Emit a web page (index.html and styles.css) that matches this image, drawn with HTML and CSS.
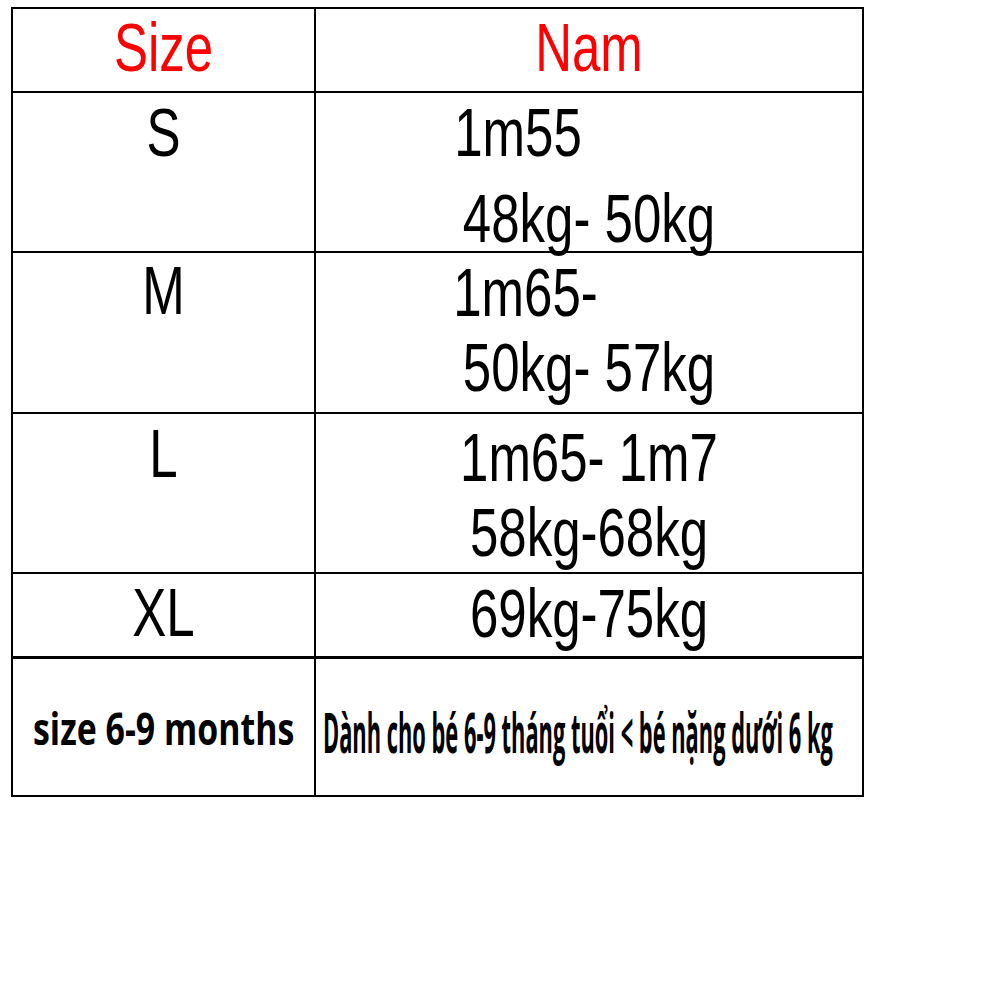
FILE: index.html
```html
<!DOCTYPE html>
<html lang="vi">
<head>
<meta charset="utf-8">
<title>Bảng size</title>
<link rel="stylesheet" href="styles.css">
</head>
<body>
<div class="sheet">
  <div class="cell head"><div class="line"><span class="t red">Size</span></div></div>
  <div class="cell head"><div class="line"><span class="t red">Nam</span></div></div>

  <div class="cell row-s"><div class="line"><span class="t">S</span></div></div>
  <div class="cell row-s">
    <div class="line first-s"><span class="t">1m55</span></div>
    <div class="line"><span class="t">48kg- 50kg</span></div>
  </div>

  <div class="cell row-m left-m"><div class="line"><span class="t">M</span></div></div>
  <div class="cell row-m">
    <div class="line first-m"><span class="t">1m65-</span></div>
    <div class="line"><span class="t">50kg- 57kg</span></div>
  </div>

  <div class="cell row-l left-l"><div class="line"><span class="t">L</span></div></div>
  <div class="cell row-l">
    <div class="line"><span class="t">1m65- 1m7</span></div>
    <div class="line"><span class="t">58kg-68kg</span></div>
  </div>

  <div class="cell row-xl left-xl"><div class="line"><span class="t">XL</span></div></div>
  <div class="cell row-xl"><div class="line"><span class="t">69kg-75kg</span></div></div>

  <div class="cell row-baby baby-left"><span class="baby-size">size 6-9 months</span></div>
  <div class="cell row-baby baby-right"><span class="baby-note">Dành cho bé 6-9 tháng tuổi &lt; bé nặng dưới 6 kg</span></div>
</div>
</body>
</html>
```
FILE: styles.css
```css
html, body {
  margin: 0;
  padding: 0;
  background: #ffffff;
}

body {
  font-family: "Liberation Sans", Arial, sans-serif;
  color: #000000;
}

.sheet {
  display: grid;
  grid-template-columns: 303px 548px;
  grid-template-rows: 84px 160px 161px 160px 85px 138px;
  width: max-content;
  margin: 7px 0 0 11px;
  border-top: 2px solid #000;
  border-left: 2px solid #000;
}

.cell {
  box-sizing: border-box;
  border-right: 2px solid #000;
  border-bottom: 2px solid #000;
  min-width: 0;
}

.line {
  display: flex;
  justify-content: center;
  align-items: flex-start;
  height: 75px;
}

.t {
  display: inline-block;
  font-size: 51px;
  line-height: 51px;
  white-space: pre;
  transform: scaleY(1.35);
}

.red {
  color: #ff0000;
}

.head {
  padding-top: 13px;
}

.row-s {
  padding-top: 14px;
}

.row-s .line {
  height: 86px;
}

.first-s {
  padding-right: 142px;
}

.row-m {
  padding-top: 14px;
}

.left-m {
  padding-top: 12px;
}

.first-m {
  padding-right: 127px;
}

.row-l {
  padding-top: 18px;
}

.left-l {
  padding-top: 14px;
}

.row-xl {
  padding-top: 14px;
  border-bottom-width: 3px;
}

.left-xl {
  padding-top: 13px;
}

.baby-left {
  display: flex;
  justify-content: center;
  align-items: flex-start;
  padding-top: 47px;
}

.baby-size {
  display: inline-block;
  font-family: "Open Sans", "Liberation Sans", sans-serif;
  font-weight: 700;
  font-size: 44px;
  line-height: 44px;
  white-space: nowrap;
  transform: scaleX(0.77);
}

.baby-right {
  padding: 44px 0 0 7px;
  overflow: hidden;
}

.baby-note {
  display: inline-block;
  font-family: "Open Sans", "Liberation Sans", sans-serif;
  font-weight: 700;
  font-size: 56px;
  line-height: 56px;
  white-space: nowrap;
  transform-origin: left center;
  transform: scaleX(0.39);
}
```
